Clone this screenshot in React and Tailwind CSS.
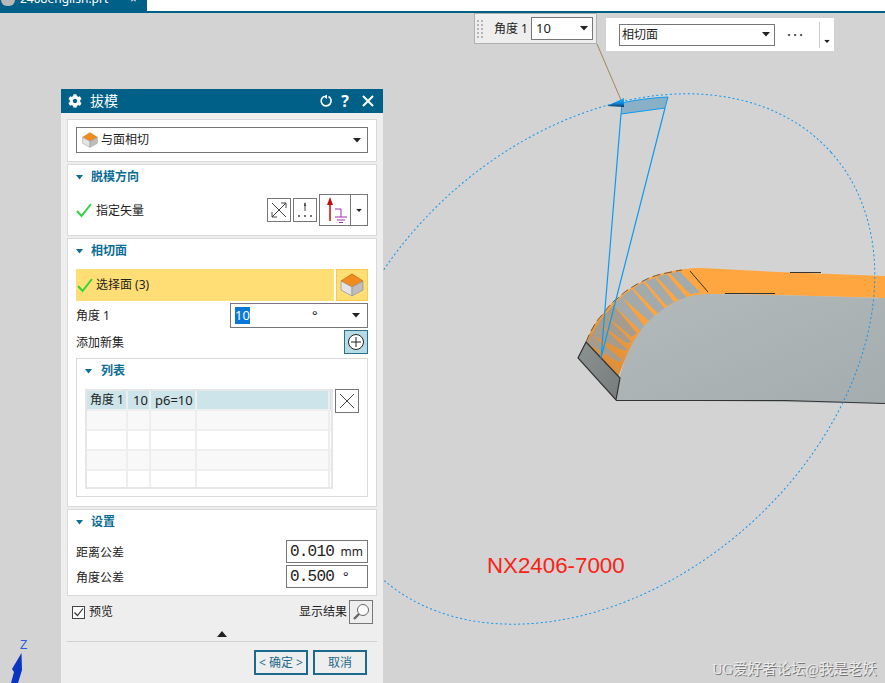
import React from 'react';
import {FaCog} from 'react-icons/fa';

const font = {fontFamily: '"Noto Sans", "Noto Sans CJK SC", sans-serif'};
const mono = {fontFamily: '"Liberation Mono", monospace'};

const Caret = ({className = ''}) => (
    <svg width="8" height="5" viewBox="0 0 8 5" className={className}>
        <path d="M0 0H8L4 4.5Z" fill="#222"/>
    </svg>
);

const SectionTitle = ({children, className = ''}) => (
    <div className="flex items-center h-[24px]">
        <svg width="7" height="5" viewBox="0 0 7 5"><path d="M0 0H7L3.5 4.5Z" fill="#0b6c94"/></svg>
        <span className={`ml-[8px] text-[12px] font-bold text-[#0b6c94] leading-none ${className}`}>{children}</span>
    </div>
);

const Check = () => (
    <svg width="16" height="15" viewBox="0 0 16 15">
        <path d="M1 8L5.5 13L15 1" fill="none" stroke="#2ed63c" strokeWidth="2"/>
    </svg>
);

const FaceIcon = ({size = 16}) => (
    <svg width={size} height={size} viewBox="0 0 24 24">
        <path d="M12 1L23 8L12 14L1 8Z" fill="#f08c1e" stroke="#c96a10" strokeWidth="0.8"/>
        <path d="M1 8L12 14V23L1 17Z" fill="#e4e4e4" stroke="#999" strokeWidth="0.8"/>
        <path d="M23 8L12 14V23L23 17Z" fill="#bdbdbd" stroke="#999" strokeWidth="0.8"/>
    </svg>
);

const IconBtn = ({children, className = ''}) => (
    <div className={`w-[24px] h-[24px] border border-[#777] flex items-center justify-center shrink-0 ${className}`}>{children}</div>
);

const CrossIcon = () => (
    <svg width="20" height="20" viewBox="0 0 20 20"><path d="M3 3L17 17M17 3L3 17" stroke="#444" strokeWidth="1"/></svg>
);

const rows = [
    ['角度 1', '10', 'p6=10', ''],
    ['', '', '', ''],
    ['', '', '', ''],
    ['', '', '', ''],
    ['', '', '', ''],
];
const rowBg = ['bg-[#cce4ea]', 'bg-[#f8f8f8]', 'bg-white', 'bg-[#f8f8f8]', 'bg-white'];
const cellPad = ['pl-[3px]', 'pl-[5px] text-[13px]', 'pl-[4px] text-[13px]', ''];

function Dialog() {
    return (
        <div className="absolute left-[61px] top-[89px] w-[322px] h-[594px] bg-[#eeeeee] flex flex-col text-[12px] text-[#222]" style={font}>
            <div className="h-[24px] bg-[#006088] flex items-center text-white shrink-0">
                <FaCog className="ml-[7px] text-[14px]"/>
                <span className="ml-[8px] text-[14px] leading-none">拔模</span>
                <svg className="ml-auto" width="14" height="14" viewBox="0 0 14 14">
                    <path d="M5 2.4A5 5 0 1 0 9.5 2.5" fill="none" stroke="white" strokeWidth="1.6"/>
                    <path d="M8 0.5V5L4.5 2.5Z" fill="white"/>
                </svg>
                <span className="ml-[6px] w-[12px] text-center text-[16px] font-bold leading-none">?</span>
                <svg className="ml-[11px] mr-[9px]" width="12" height="12" viewBox="0 0 12 12"><path d="M1 1L11 11M11 1L1 11" stroke="white" strokeWidth="2"/></svg>
            </div>

            <div className="flex flex-col gap-[2px] px-[6px] pt-[6px]">
                <div className="h-[43px] bg-white border border-[#d9d9d9] px-[8px] pt-[7px]">
                    <div className="w-full h-[26px] border border-[#777] flex items-center pl-[5px] pr-[6px]">
                        <FaceIcon/>
                        <span className="ml-[3px]">与面相切</span>
                        <Caret className="ml-auto"/>
                    </div>
                </div>

                <div className="h-[72px] bg-white border border-[#d9d9d9] px-[8px]">
                    <SectionTitle>脱模方向</SectionTitle>
                    <div className="flex items-center mt-[5px] h-[32px]">
                        <Check/>
                        <span className="ml-[4px] pt-[2px]">指定矢量</span>
                        <IconBtn className="ml-auto">
                            <svg width="20" height="20" viewBox="0 0 20 20">
                                <path d="M3 3L17 17M17 3L3 17M3 17V12M3 17H8M17 3H12M17 3V8" fill="none" stroke="#444" strokeWidth="1"/>
                            </svg>
                        </IconBtn>
                        <IconBtn className="ml-[2px]">
                            <svg width="20" height="20" viewBox="0 0 20 20">
                                <path d="M10 3V11" stroke="#444" strokeWidth="1"/>
                                <path d="M10 2L11.2 6H8.8Z" fill="#444"/>
                                <path d="M3 16H5M9 16H11M15 16H17" stroke="#444" strokeWidth="1.5"/>
                            </svg>
                        </IconBtn>
                        <div className="ml-[2px] w-[49px] h-[32px] border border-[#777] flex shrink-0">
                            <div className="w-[31px] border-r border-[#777] flex items-center justify-center">
                                <svg width="26" height="28" viewBox="0 0 26 28">
                                    <path d="M8 8V25" stroke="#c01010" strokeWidth="1.5"/>
                                    <path d="M8 1L11 9H5Z" fill="#c01010"/>
                                    <path d="M14 14H20V22M14 22H26M16 25H24M18 27.5H22" transform="translate(-1,-1)" fill="none" stroke="#a030b0" strokeWidth="1"/>
                                </svg>
                            </div>
                            <div className="flex-1 flex items-center justify-center"><Caret className="scale-75"/></div>
                        </div>
                    </div>
                </div>

                <div className="h-[269px] bg-white border border-[#d9d9d9] px-[8px]">
                    <SectionTitle>相切面</SectionTitle>
                    <div className="flex mt-[6px] h-[32px]">
                        <div className="w-[258px] bg-[#ffdf75] flex items-center pl-[1px]">
                            <Check/>
                            <span className="ml-[3px]">选择面 (3)</span>
                        </div>
                        <div className="ml-[2px] w-[32px] bg-[#ffdf75] border border-[#fcc94a] flex items-center justify-center">
                            <FaceIcon size={24}/>
                        </div>
                    </div>
                    <div className="flex items-center mt-[2px] h-[25px]">
                        <span>角度 1</span>
                        <div className="ml-auto w-[138px] h-[25px] border border-[#777] flex items-center pl-[4px] pr-[7px]">
                            <span className="bg-[#0a78d7] text-white leading-[17px] text-[13px]">10</span>
                            <span className="ml-[62px] text-[13px] leading-none">°</span>
                            <Caret className="ml-auto"/>
                        </div>
                    </div>
                    <div className="flex items-center mt-[2px] h-[24px]">
                        <span className="pt-[2px]">添加新集</span>
                        <div className="ml-auto w-[24px] h-[24px] border border-[#2d6f8a] bg-[#b5dbe5] flex items-center justify-center">
                            <svg width="18" height="18" viewBox="0 0 18 18">
                                <circle cx="9" cy="9" r="7.5" fill="white" stroke="#222" strokeWidth="1"/>
                                <path d="M9 4V14M4 9H14" stroke="#222" strokeWidth="1"/>
                            </svg>
                        </div>
                    </div>
                    <div className="mt-[4px] h-[139px] border border-[#d9d9d9] pl-[8px]">
                        <SectionTitle className="ml-[9px]">列表</SectionTitle>
                        <div className="flex mt-[6px]">
                            <div className="w-[248px] h-[100px] border-2 border-[#e6e6e6] overflow-hidden">
                                {rows.map((r, i) => (
                                    <div key={i} className={`grid grid-cols-[41px_23px_46px_133px] h-[20px] border-b-2 border-[#eeeeee] ${rowBg[i]}`}>
                                        {r.map((c, j) => (
                                            <div key={j} className={`border-r-2 border-[#eeeeee] leading-[18px] whitespace-nowrap overflow-hidden ${cellPad[j]}`}>{c}</div>
                                        ))}
                                    </div>
                                ))}
                            </div>
                            <IconBtn className="ml-[2px]"><CrossIcon/></IconBtn>
                        </div>
                    </div>
                </div>

                <div className="h-[87px] bg-white border border-[#d9d9d9] px-[8px]">
                    <SectionTitle>设置</SectionTitle>
                    <div className="flex items-center justify-between mt-[6px] h-[23px]">
                        <span className="pt-[2px]">距离公差</span>
                        <div className="w-[82px] h-[23px] border border-[#777] flex items-center pl-[3px]">
                            <span className="text-[16px] tracking-[-0.8px] leading-none" style={mono}>0.010</span>
                            <span className="ml-auto mr-[4px] text-[12px] leading-none">mm</span>
                        </div>
                    </div>
                    <div className="flex items-center justify-between mt-[2px] h-[23px]">
                        <span className="pt-[2px]">角度公差</span>
                        <div className="w-[82px] h-[23px] border border-[#777] flex items-center pl-[3px]">
                            <span className="text-[16px] tracking-[-0.8px] leading-none" style={mono}>0.500</span>
                            <span className="ml-[9px] text-[13px] leading-none">°</span>
                        </div>
                    </div>
                </div>
            </div>

            <div className="flex items-center h-[24px] mt-[4px] pl-[11px] pr-[10px] shrink-0">
                <div className="w-[13px] h-[13px] border border-[#444] bg-white flex items-center justify-center">
                    <svg width="11" height="11" viewBox="0 0 11 11"><path d="M1.5 5.5L4.5 8.5L10 1.5" fill="none" stroke="#333" strokeWidth="1.2"/></svg>
                </div>
                <span className="ml-[4px]">预览</span>
                <span className="ml-auto mr-[2px]">显示结果</span>
                <IconBtn>
                    <svg width="20" height="20" viewBox="0 0 20 20">
                        <circle cx="12" cy="8" r="5.5" fill="white" stroke="#666" strokeWidth="1"/>
                        <path d="M8 12L3 17" stroke="#666" strokeWidth="2.4"/>
                    </svg>
                </IconBtn>
            </div>
            <div className="flex justify-center h-[18px] items-end mx-[6px] border-b border-[#cfcfcf] pb-[4px] shrink-0">
                <svg width="10" height="6" viewBox="0 0 10 6"><path d="M0 6H10L5 0Z" fill="#222"/></svg>
            </div>
            <div className="flex justify-end gap-[5px] pr-[16px] mt-[8px]">
                <div className="w-[54px] h-[25px] border-2 border-[#1d6a8c] flex items-center justify-center text-[12px] text-[#1d6a8c] whitespace-pre">&lt; 确定 &gt;</div>
                <div className="w-[54px] h-[25px] border-2 border-[#1d6a8c] flex items-center justify-center text-[12px] text-[#1d6a8c]">取消</div>
            </div>
        </div>
    );
}

function Toolbars() {
    return (
        <>
            <div className="absolute left-[474px] top-[13px] w-[123px] h-[31px] bg-[#eeeeee] border border-[#b0b0b0] flex items-center text-[12px] text-[#222]" style={font}>
                <div className="ml-[2px] grid grid-cols-2 gap-[2px]">
                    {[...Array(10)].map((_, i) => <div key={i} className="w-[2px] h-[2px] bg-[#b5b5b5]"/>)}
                </div>
                <span className="ml-[11px] whitespace-nowrap">角度 1</span>
                <div className="ml-[3px] w-[62px] h-[23px] border border-[#777] bg-white flex items-center pl-[4px] pr-[4px] text-[13px]">
                    10
                    <Caret className="ml-auto"/>
                </div>
            </div>
            <div className="absolute left-[606px] top-[18px] w-[228px] h-[33px] bg-white flex items-center text-[12px] text-[#222]" style={font}>
                <div className="ml-[13px] w-[156px] h-[22px] border border-[#777] flex items-center pl-[2px] pr-[4px]">
                    相切面
                    <Caret className="ml-auto"/>
                </div>
                <span className="ml-[12px] text-[15px] tracking-[2px] leading-none">···</span>
                <div className="ml-[14px] w-px h-[26px] bg-[#ccc]"/>
                <Caret className="ml-[3px] mt-[14px] scale-75"/>
            </div>
        </>
    );
}

// hatch on the fillet, written in pixels of a crop at (585,265) scaled 3x
const hatch = [
    [[255, 25], [285, 20], [345, 82], [315, 88]],
    [[215, 35], [245, 28], [305, 98], [280, 105]],
    [[180, 48], [210, 38], [268, 112], [245, 122]],
    [[145, 70], [175, 52], [240, 132], [218, 145]],
    [[110, 95], [140, 72], [212, 158], [195, 170]],
    [[85, 120], [110, 95], [182, 190], [165, 195]],
];
const hatchLow = [
    [[60, 150], [85, 120], [155, 205], [140, 215]],
    [[40, 175], [60, 150], [140, 230], [125, 235]],
    [[20, 210], [40, 175], [128, 255], [110, 255]],
    [[5, 235], [20, 210], [112, 285], [100, 290]],
];
const toPoints = (p) => p.map(([x, y]) => `${585 + x / 3},${265 + y / 3}`).join(' ');

function Model() {
    return (
        <svg className="absolute inset-0" width="885" height="683" viewBox="0 0 885 683">
            <defs>
                <linearGradient id="side" x1="0" y1="0" x2="1" y2="1">
                    <stop offset="0" stopColor="#b2babc"/>
                    <stop offset="1" stopColor="#a4acae"/>
                </linearGradient>
                <linearGradient id="front" x1="0" y1="0" x2="1" y2="1">
                    <stop offset="0" stopColor="#8d9292"/>
                    <stop offset="1" stopColor="#767b7b"/>
                </linearGradient>
                <linearGradient id="orangeDark" gradientUnits="userSpaceOnUse" x1="640" y1="300" x2="590" y2="370">
                    <stop offset="0" stopColor="#ffa640"/>
                    <stop offset="1" stopColor="#d88a38"/>
                </linearGradient>
                <linearGradient id="cone" x1="0" y1="0" x2="0" y2="1">
                    <stop offset="0" stopColor="#18b0ff"/>
                    <stop offset="0.55" stopColor="#1090e0"/>
                    <stop offset="1" stopColor="#063a66"/>
                </linearGradient>
            </defs>
            <path d="M578 358L586 342C590 332 595 322 602 315C608 307 612 302 618 298C626 290 635 285 645 280C652 276 660 274 668 272C680 269 690 268 702 268L778 272L885 276V298L775 295L708 294C690 296 675 302 665 309C655 316 648 322 640 333C632 345 624 360 618 378L616 400Z" fill="url(#orangeDark)"/>
            {hatch.map((p, i) => <polygon key={i} points={toPoints(p)} fill="#a2aaac"/>)}
            {hatchLow.map((p, i) => <polygon key={i} points={toPoints(p)} fill="#a59c8e"/>)}
            <path d="M617 400C617 392 618 383 620 375C623 365 626 356 630 348C634 340 639 332 645 325C651 318 658 313 665 308C671 304 678 300 685 298C692 295 700 294 708 294L775 295L885 298V403.5L785 402L616 400Z" fill="url(#side)"/>
            <polygon points="578,358 586,342 620,378 616,400" fill="url(#front)"/>
            <path d="M586 342L620 378L616 400L578 358L586 342M616 400.5H785L885 403.5" fill="none" stroke="#333" strokeWidth="1.2"/>
            <path d="M690 271L708 292M790 272.5H821M725 293.5H775" fill="none" stroke="#333" strokeWidth="1"/>
            <path d="M586 342C590 332 595 322 602 315C608 307 612 302 618 298C626 290 635 285 645 280C652 276 660 274 682 270" fill="none" stroke="#444" strokeWidth="0.8" strokeDasharray="8 4"/>

            <ellipse cx="600" cy="359" rx="310" ry="223" transform="rotate(-41.8 600 359)" fill="none" stroke="#0a98f5" strokeWidth="1" strokeDasharray="2 2.5"/>

            <path d="M621 114L665 108L668 97C650 98 635 100 622 103Z" fill="#8ab0c8" stroke="#0a9bf0" strokeWidth="1"/>
            <path d="M621 114L601 358L665 108" fill="none" stroke="#0a9bf0" strokeWidth="1.2"/>
            <path d="M607 106L624 98V107Z" fill="url(#cone)"/>
            <path d="M597 44L621 100" stroke="#9a8a60" strokeWidth="1"/>

            {/* triad */}
            <path d="M21.5 653L22 670L18 683H11L14 672L12 669Z" fill="#0a35c0"/>
        </svg>
    );
}

export default function App() {
    return (
        <div className="relative w-[885px] h-[683px] overflow-hidden bg-[#d3d3d3]">
            <Model/>
            <div className="relative h-[13px] bg-white border-b-2 border-[#006088]">
                <div className="w-[147px] h-[11px] bg-[#006088] text-white text-[12px] overflow-hidden flex items-start" style={font}>
                    <div className="w-[14px] h-[6px] ml-[1px] rounded-b-full bg-[#b8b8b8] shrink-0"/>
                    <span className="ml-[5px] -mt-[9px] leading-[16px] whitespace-nowrap">2408english.prt</span>
                    <span className="ml-[8px] -mt-[7px] leading-[12px] text-[11px] whitespace-nowrap">▫ ×</span>
                </div>
            </div>
            <Toolbars/>
            <Dialog/>
            <div className="absolute left-[487px] top-[552px] text-[22.3px] leading-[28px] text-[#fb2216]" style={{fontFamily: '"Liberation Sans", sans-serif'}}>NX2406-7000</div>
            <div className="absolute left-[20px] top-[639px] text-[12px] leading-[12px] text-[#2d5be0]" style={{fontFamily: '"Liberation Sans", sans-serif'}}>Z</div>
            <div className="absolute left-[712px] top-[661px] text-[14.5px] leading-[16px] text-[#ececec] whitespace-nowrap [text-shadow:1px_1px_0_#777]" style={{fontFamily: '"Liberation Serif", "Noto Sans CJK SC", serif'}}>UG爱好者论坛@我是老妖</div>
        </div>
    );
}
